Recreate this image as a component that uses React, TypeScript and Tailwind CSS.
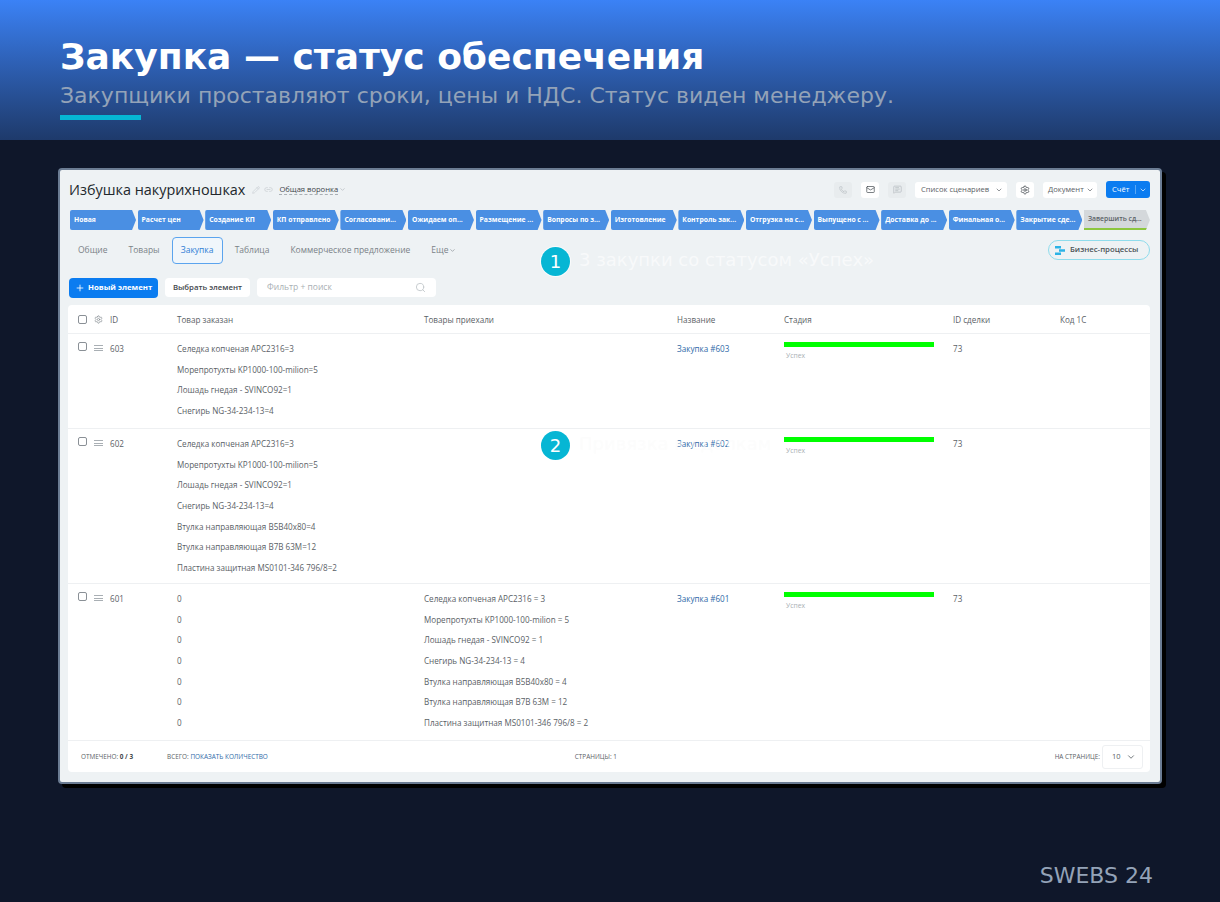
import { ChevronDown, Link2, Mail, MessageSquareText, Pencil, Phone, Plus, Search, Settings } from "lucide-react";

const stages = [
  "Новая", "Расчет цен", "Создание КП", "КП отправлено", "Согласовани...", "Ожидаем оп...", "Размещение ...", "Вопросы по з...",
  "Изготовление", "Контроль зак...", "Отгрузка на с...", "Выпущено с ...", "Доставка до ...", "Финальная о...", "Закрытие сде...",
];

const ordered = [
  "Селедка копченая APC2316=3",
  "Морепротухты KP1000-100-milion=5",
  "Лошадь гнедая - SVINCO92=1",
  "Снегирь NG-34-234-13=4",
];
const orderedLong = [
  ...ordered,
  "Втулка направляющая B5B40x80=4",
  "Втулка направляющая B7B 63M=12",
  "Пластина защитная MS0101-346 796/8=2",
];
const arrived = [
  "Селедка копченая APC2316 = 3",
  "Морепротухты KP1000-100-milion = 5",
  "Лошадь гнедая - SVINCO92 = 1",
  "Снегирь NG-34-234-13 = 4",
  "Втулка направляющая B5B40x80 = 4",
  "Втулка направляющая B7B 63M = 12",
  "Пластина защитная MS0101-346 796/8 = 2",
];

const rows = [
  { id: "603", left: ordered, right: [] as string[], h: "h-[95px]" },
  { id: "602", left: orderedLong, right: [] as string[], h: "h-[155px]" },
  { id: "601", left: ["0", "0", "0", "0", "0", "0", "0"], right: arrived, h: "h-[157px]" },
];

const cols = "grid grid-cols-[108px_247px_253px_107px_169px_107px_1fr]";

const Lines = ({ items }: { items: string[] }) => (
  <div className="flex flex-col gap-[9.7px]">
    {items.map((t, i) => (
      <div key={i} className="h-[11px] leading-[11px] whitespace-nowrap">{t}</div>
    ))}
  </div>
);

const Box = ({ up }: { up?: boolean }) => (
  <span className={`w-[9px] h-[9px] rounded-[2px] border border-[#8a9096] bg-white ${up ? "-mt-[1px]" : ""}`} />
);

const App = () => {
  return (
    <div className="relative w-[1220px] h-[902px] bg-[#0f172a] overflow-hidden font-['DejaVu_Sans',sans-serif]">
      <header className="h-[140px] pl-[60px] pt-[35px] bg-gradient-to-b from-[#3b82f6] to-[#1e3a6b]">
        <h1 className="text-[36px] leading-[44px] font-bold text-white">Закупка — статус обеспечения</h1>
        <p className="text-[22px] leading-[26px] mt-[4px] text-[#94a3b8]">Закупщики проставляют сроки, цены и НДС. Статус виден менеджеру.</p>
        <div className="w-[81px] h-[5px] mt-[6px] bg-[#06b6d4]" />
      </header>

      <section className="relative ml-[58px] mt-[28px] w-[1104px] h-[616px] rounded-[4px] border-2 border-[#6b7c93] bg-[#eef2f4] shadow-[4px_4px_0_#000] pl-[9px] pr-[10px] font-['Open_Sans',sans-serif] text-[#4b5257]">
        <div className="flex items-center h-[39px]">
          <span className="text-[14.4px] font-medium text-[#22282c]">Избушка накурихношках</span>
          <Pencil size={8} className="ml-[7px] text-[#c9cfd3]" />
          <Link2 size={9} className="ml-[4px] text-[#c9cfd3]" />
          <span className="ml-[6px] text-[7.6px] text-[#3f464b] border-b border-dashed border-[#aab0b5] leading-[10px]">Общая воронка</span>
          <ChevronDown size={7} className="ml-[1px] text-[#a8aeb3]" />
          <div className="ml-auto flex items-center gap-[9px] text-[7.6px] whitespace-nowrap">
            <span className="w-[18px] h-[16px] rounded-[3px] bg-[#e8ecee] flex items-center justify-center"><Phone size={8} className="text-[#b8bec3]" /></span>
            <span className="w-[18px] h-[16px] rounded-[3px] bg-white flex items-center justify-center"><Mail size={9} className="text-[#50575c]" /></span>
            <span className="w-[18px] h-[16px] rounded-[3px] bg-[#e8ecee] flex items-center justify-center"><MessageSquareText size={9} className="text-[#b8bec3]" /></span>
            <span className="w-[92px] h-[16px] rounded-[3px] bg-white flex items-center pl-[6px] text-[#5a6166]">Список сценариев<ChevronDown size={8} className="ml-auto mr-[4px]" /></span>
            <span className="w-[18px] h-[16px] rounded-[3px] bg-white flex items-center justify-center"><Settings size={10} className="text-[#50575c]" /></span>
            <span className="w-[54px] h-[16px] rounded-[3px] bg-white flex items-center pl-[5px] text-[#5a6166]">Документ<ChevronDown size={8} className="ml-auto mr-[3px]" /></span>
            <span className="w-[44px] h-[17px] rounded-[3px] bg-[#0b7cf0] text-white flex items-center pl-[6px]">Счёт<span className="ml-[6px] h-[9px] border-l border-[#5aa8f5]" /><ChevronDown size={8} className="ml-auto mr-[3px]" /></span>
          </div>
        </div>

        <div className="flex gap-[1.6px] h-[20px] mt-[1px] ml-[1px] text-[6.8px] font-bold">
          {stages.map((s) => (
            <div key={s} className="flex-1 min-w-0 flex items-center pl-[4px] text-white whitespace-nowrap bg-[#4a8fe3] rounded-l-[2px] [clip-path:polygon(0_0,94%_0,100%_50%,94%_100%,0_100%)]">{s}</div>
          ))}
          <div className="flex-1 min-w-0 flex items-center pl-[4px] text-[#5a6166] font-semibold whitespace-nowrap bg-[#d4d8db] border-b-2 border-[#8cc63f] [clip-path:polygon(0_0,94%_0,100%_50%,94%_100%,0_100%)]">Завершить сд...</div>
        </div>

        <div className="flex items-center h-[28px] mt-[6px] text-[8.5px] text-[#7b8288]">
          <span className="ml-[9px]">Общие</span>
          <span className="ml-[21px]">Товары</span>
          <span className="ml-[12px] w-[51px] h-[27px] rounded-[4px] border border-[#5ba4ee] bg-[#f0f6fb] text-[#2f7fd6] flex items-center justify-center">Закупка</span>
          <span className="ml-[12px]">Таблица</span>
          <span className="ml-[21px]">Коммерческое предложение</span>
          <span className="ml-[21px]">Еще</span>
          <ChevronDown size={7} className="ml-[1px]" />
          <span className="ml-auto w-[102px] h-[20px] rounded-full border border-[#8fdcec] flex items-center pl-[5px] text-[#4b5257] font-semibold text-[7.8px] whitespace-nowrap">
            <svg width="12" height="11" viewBox="0 0 12 11" className="mr-[4px]"><path d="M1 1h6v2.5H1zM5 4.2h6v2.5H5zM1 7.5h6V10H1z" fill="#2cb3e6" /></svg>
            Бизнес-процессы
          </span>
        </div>

        <div className="flex items-center h-[21px] mt-[13px] text-[7.8px] whitespace-nowrap">
          <span className="w-[89px] h-[20px] rounded-[4px] bg-[#0b7cf0] text-white font-bold flex items-center pl-[6px]"><Plus size={10} className="mr-[3px]" />Новый элемент</span>
          <span className="ml-[7px] w-[85px] h-[19px] rounded-[4px] bg-white text-[#3f464b] font-semibold flex items-center justify-center">Выбрать элемент</span>
          <span className="ml-[7px] w-[179px] h-[19px] rounded-[4px] bg-white text-[#a9afb4] text-[8.5px] flex items-center px-[10px]">Фильтр + поиск<Search size={11} className="ml-auto text-[#c3c8cc]" /></span>
        </div>

        <div className="mt-[7px] -ml-[1px] rounded-[4px] bg-white text-[8.1px] text-[#5a6166]">
          <div className={`${cols} items-center h-[29px] pt-[2px] pl-[1px] border-b border-[#eef0f2]`}>
            <div className="flex items-center pl-[9px] gap-[7px]">
              <Box />
              <Settings size={9} className="text-[#8a9096]" />
              <span>ID</span>
            </div>
            <div>Товар заказан</div>
            <div>Товары приехали</div>
            <div>Название</div>
            <div>Стадия</div>
            <div>ID сделки</div>
            <div>Код 1С</div>
          </div>

          {rows.map((r) => (
            <div key={r.id} className={`${cols} ${r.h} pt-[9px] pl-[1px] border-b border-[#eef0f2]`}>
              <div className="flex items-start pl-[9px] gap-[7px]">
                <Box up />
                <span className="mt-[2px] w-[9px] h-[6px] border-y border-[#a9afb4] relative after:content-[''] after:absolute after:left-0 after:right-0 after:top-[1.5px] after:border-t after:border-[#a9afb4]" />
                <span className="leading-[11px]">{r.id}</span>
              </div>
              <Lines items={r.left} />
              <Lines items={r.right} />
              <div className="leading-[11px] text-[#2f6aa8]">Закупка #{r.id}</div>
              <div className="-mt-[1px]">
                <div className="w-[150px] h-[5px] bg-[#00ff00]" />
                <div className="mt-[4px] ml-[2px] text-[6.8px] leading-[9px] text-[#a9afb4]">Успех</div>
              </div>
              <div className="leading-[11px]">73</div>
              <div />
            </div>
          ))}

          <div className="flex items-center h-[31px] pl-[13px] pr-[7px] text-[6.4px] text-[#5a6166] whitespace-nowrap">
            <span>ОТМЕЧЕНО: <b className="text-[#3f464b]">0 / 3</b></span>
            <span className="ml-[34px]">ВСЕГО: <span className="text-[#2f6aa8]">ПОКАЗАТЬ КОЛИЧЕСТВО</span></span>
            <span className="ml-[307px]">СТРАНИЦЫ: 1</span>
            <span className="ml-auto">НА СТРАНИЦЕ:</span>
            <span className="ml-[2px] w-[41px] h-[24px] rounded-[3px] border border-[#eef0f2] flex items-center pl-[9px] text-[7.5px]">10<ChevronDown size={10} className="ml-auto mr-[6px]" /></span>
          </div>
        </div>
      </section>

      <div className="absolute left-[541px] top-[247px] w-[29px] h-[29px] rounded-full bg-[#06b6d4] ring-1 ring-white/70 text-white text-[18px] leading-[29px] text-center">1</div>
      <div className="absolute left-[579px] top-[249px] text-[18px] leading-[22px] text-white/60 whitespace-nowrap">3 закупки со статусом «Успех»</div>
      <div className="absolute left-[541px] top-[431px] w-[29px] h-[29px] rounded-full bg-[#06b6d4] ring-1 ring-white/70 text-white text-[18px] leading-[29px] text-center">2</div>
      <div className="absolute left-[579px] top-[433px] text-[18px] leading-[22px] text-white/60 [text-shadow:0_0_1px_rgba(0,0,0,0.025)] whitespace-nowrap">Привязка к сделкам</div>

      <div className="absolute right-[67px] top-[863px] text-[22px] leading-[26px] text-[#94a3b8]">SWEBS 24</div>
    </div>
  );
};

export default App;
